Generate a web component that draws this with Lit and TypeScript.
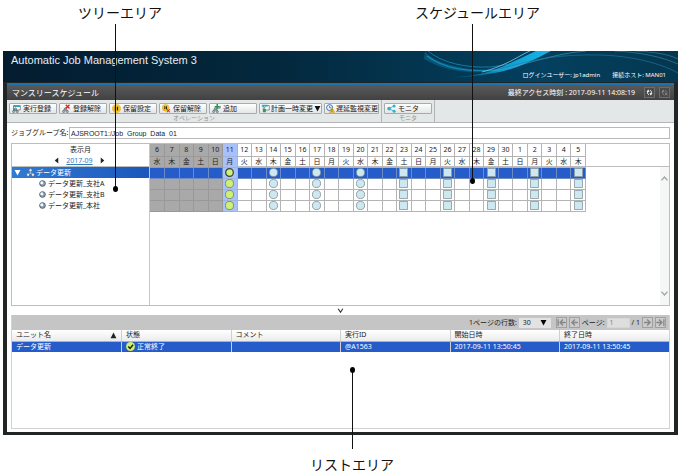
import { LitElement, html, svg, css, nothing } from "lit";
import { customElement } from "lit/decorators.js";
import { classMap } from "lit/directives/class-map.js";

const WEEK = ["水", "木", "金", "土", "日", "月", "火"];
const DAYS = Array.from({ length: 30 }, (_, i) => ({
  day: i < 25 ? i + 6 : i - 24,
  name: WEEK[i % 7],
  past: i < 5,
  today: i === 5,
}));
const ROUND = [8, 11, 14];
const SQUARE = [17, 20, 23, 26, 29];
const JOBS = ["データ更新_支社A", "データ更新_支社B", "データ更新_本社"];

const glass = svg`<path d="M2 2h9v6h-9z" fill="#fff" stroke="#5d6b73"/><path d="M2 2h9v2h-9z" fill="#36a9b5"/>`;
const tree = svg`<path d="M4 6v2M2 10V8h5v2" fill="none" stroke="#4d5961"/><circle cx="4.500" cy="6.500" r="1.500" fill="#9ab6c8" stroke="#4d5961" stroke-width=".7"/><circle cx="2.200" cy="10" r="1.500" fill="#9ab6c8" stroke="#4d5961" stroke-width=".7"/><circle cx="7" cy="10" r="1.500" fill="#9ab6c8" stroke="#4d5961" stroke-width=".7"/>`;

const ICONS: Record<string, unknown> = {
  run: svg`${glass}${tree}`,
  cancel: svg`${tree}<path d="M5 1l5 5M10 1L5 6" stroke="#d8261c" stroke-width="1.800"/>`,
  hold: svg`<circle cx="6" cy="6" r="5.500" fill="#f8c822" stroke="#d89c10" stroke-width=".6"/><path d="M4.500 3.500v5M7.300 3.500v5" stroke="#2c2410" stroke-width="1.700"/>`,
  release: svg`<circle cx="4.800" cy="5" r="4.500" fill="#f8c822" stroke="#d89c10" stroke-width=".6"/><path d="M3.800 3v4M6 3v4" stroke="#2c2410" stroke-width="1.400"/><path d="M6.500 7l4 4M10.500 7l-4 4" stroke="#d8261c" stroke-width="1.400"/>`,
  add: svg`${tree}<path d="M6 5.500h5v-3" fill="none" stroke="#5d6b73"/><path d="M7 0v7M3.500 3.500h7" stroke="#1f9a48" stroke-width="2"/>`,
  plan: svg`<path d="M3 2h8v6h-8z" fill="#fff" stroke="#5d6b73"/><path d="M1 1h8v2.500h-8z" fill="#36a9b5"/><path d="M5 4v4" stroke="#4d5961"/><path d="M2.500 7h4v4h-4z" fill="#2f9b54"/>`,
  delay: svg`<circle cx="4.800" cy="4.800" r="4" fill="#e9f1fb" stroke="#2c65b8" stroke-width="1.200"/><path d="M4.800 2.500v2.500h2" fill="none" stroke="#2c65b8"/><path d="M8 4.500l3.700 6.700H4.500z" fill="#fbc81c" stroke="#a87c08" stroke-width=".5"/><path d="M8 6.800v2M8 9.500v1" stroke="#332600" stroke-width=".9"/>`,
  monitor: svg`<path d="M9 2.500L3 6l6 3.500" fill="none" stroke="#35abc0" stroke-width="1.100"/><circle cx="2.800" cy="6" r="2.500" fill="#35b3cb"/><circle cx="9.500" cy="2.500" r="2" fill="#35b3cb"/><circle cx="9.500" cy="9.500" r="2" fill="#35b3cb"/>`,
  group: svg`<path d="M6 4v3M2.500 9V7h7v2" fill="none" stroke="#cfe0f2"/><circle cx="6" cy="3" r="2.200" fill="#dce9f4" stroke="#39506c" stroke-width=".8"/><circle cx="2.800" cy="9" r="2.200" fill="#dce9f4" stroke="#39506c" stroke-width=".8"/><circle cx="9.200" cy="9" r="2.200" fill="#dce9f4" stroke="#39506c" stroke-width=".8"/>`,
  job: svg`<circle cx="6" cy="6" r="4.900" fill="#8fa5b8" stroke="#3c4f60" stroke-width="1.400"/><circle cx="4.800" cy="4.600" r="2.600" fill="#f3f8fc"/>`,
  ok: svg`<circle cx="6" cy="6" r="5.900" fill="#d4ee6c"/><path d="M3 6l2.400 2.500L9.400 3.800" fill="none" stroke="#1d2408" stroke-width="2"/>`,
  refresh: svg`<path d="M4.800 10C2.400 8.500 2.300 6 3.300 3.500M7.200 2C9.600 3.500 9.700 6 8.700 8.500" fill="none" stroke="#f5f5f5" stroke-width="1.700"/><path d="M.8 4.500L4 .8l2 4.200zM11.200 7.500L8 11.200 6 7z" fill="#f5f5f5"/>`,
  stop: svg`<path d="M4.800 10C2.400 8.500 2.300 6 3.300 3.500M7.200 2C9 3 9.500 4.500 9 6" fill="none" stroke="#8b8b8b" stroke-width="1.500"/><path d="M.8 4.500L4 .8l2 4.200z" fill="#8b8b8b"/><path d="M6.500 6.500l4.500 4.500M11 6.500L6.500 11" stroke="#8b8b8b" stroke-width="1.500"/>`,
  first: svg`<path d="M1.500 1.500v9M11.500 6H4M8 2L4 6l4 4" fill="none" stroke="#858585" stroke-width="1.700"/>`,
  prev: svg`<path d="M10.500 6H2.500M6.500 2L2.500 6l4 4" fill="none" stroke="#858585" stroke-width="1.700"/>`,
  next: svg`<path d="M1.500 6h8M5.500 2l4 4-4 4" fill="none" stroke="#858585" stroke-width="1.700"/>`,
  last: svg`<path d="M10.500 1.500v9M.5 6H8M4 2l4 4-4 4" fill="none" stroke="#858585" stroke-width="1.700"/>`,
  down: svg`<path d="M1 1.500h10L6 11z" fill="currentColor"/>`,
  up: svg`<path d="M1 10.500h10L6 1z" fill="currentColor"/>`,
  left: svg`<path d="M9 1v10L3 6z" fill="currentColor"/>`,
  right: svg`<path d="M3 1v10l6-5z" fill="currentColor"/>`,
  chevUp: svg`<path d="M2 8.500l4-4.500 4 4.500" fill="none" stroke="#a2a2a2" stroke-width="1.800"/>`,
  chevDown: svg`<path d="M2 3.500l4 4.500 4-4.500" fill="none" stroke="#a2a2a2" stroke-width="1.800"/>`,
  fold: svg`<path d="M2 3l4 6 4-6" fill="none" stroke="#333" stroke-width="2"/>`,
  round: svg`<circle cx="6" cy="6" r="5.400" fill="#cde8ee" stroke="#7f9197" stroke-width="1.100"/>`,
  square: svg`<path d="M.6.600h10.800v10.800H.6z" fill="#cde8ee" stroke="#8b9da3" stroke-width="1.200"/>`,
  done: svg`<circle cx="6" cy="6" r="5.400" fill="#cdf077" stroke="#75805a" stroke-width="1.100"/>`,
  doneTop: svg`<circle cx="6" cy="6" r="5.100" fill="#cdf077" stroke="#3c4530" stroke-width="1.700"/>`,
};

const icon = (name: string, size = "") =>
  html`<svg class="icon ${size}" viewBox="0 0 12 12" aria-hidden="true">${ICONS[name]}</svg>`;

@customElement("app-root")
export class AppRoot extends LitElement {
  static styles = css`
    :host {
      display: block;
      min-height: 476px;
      background: #fff;
      color: #222;
      font: 7px/10px "Noto Sans", "Noto Sans CJK JP", sans-serif;
    }
    * { box-sizing: border-box; }
    button, input, select { font: inherit; color: inherit; margin: 0; padding: 0; border-radius: 0; }
    table { border-collapse: collapse; table-layout: fixed; }
    th { font-weight: 400; }
    .icon { display: block; flex: none; width: 9px; height: 9px; }
    .icon.s { width: 7px; height: 7px; }

    .figure { position: relative; padding: 51px 3px 42px; }
    .note {
      position: absolute;
      font: 14px/20px "Noto Sans CJK JP", sans-serif;
      color: #111;
      white-space: nowrap;
    }
    .tree-note { left: 78px; top: 2px; }
    .plan-note { left: 415px; top: 2px; }
    .list-note { left: 310px; top: 454px; }
    .line { position: absolute; width: 1px; background: #111; }
    .line::after {
      content: "";
      position: absolute;
      left: -2px;
      bottom: -3px;
      width: 5px;
      height: 6px;
      border-radius: 50%;
      background: #000;
    }
    .line.flip::after { bottom: auto; top: -3px; }
    .tree-line { left: 115px; top: 24px; height: 165px; }
    .plan-line { left: 472px; top: 24px; height: 157px; }
    .list-line { left: 352px; top: 370px; height: 79px; }

    .banner {
      display: grid;
      height: 31px;
      background: linear-gradient(90deg, #031c30, #03283d 40%, #04405f 80%, #04374f);
      color: #fff;
    }
    .banner > * { grid-area: 1 / 1; }
    .swoosh { justify-self: end; width: 278px; height: 31px; }
    .banner-text { display: flex; justify-content: space-between; padding: 0 12px 0 8px; }
    h1 { margin: 0; font: 11px/18px "Liberation Sans", sans-serif; color: #e8eef2; }
    .login { display: flex; gap: 12px; align-self: end; padding-bottom: 2px; font-size: 6px; }

    .frame {
      border: solid #222526;
      border-width: 1px 4px 3px;
      background: #fff;
    }
    .titlebar {
      display: flex;
      align-items: center;
      height: 17px;
      padding: 0 4px 0 5px;
      border-top: 2px solid #1c73ab;
      background: linear-gradient(#5a5a5a, #414141);
      color: #fff;
    }
    h2 { flex: 1; margin: 0; font: 8px/12px "Noto Sans CJK JP", sans-serif; }
    .titlebar button {
      display: grid;
      place-items: center;
      width: 11px;
      height: 11px;
      margin-left: 4px;
      border: 1px solid #6c6c6c;
      background: #4b4b4b;
    }
    .titlebar time { margin-right: 5px; }

    .toolbar { display: flex; height: 23px; background: #e3e7e7; border-bottom: 1px solid #b3b6b6; }
    .tools { padding: 3px 2px 0; border-right: 1px solid #b3b6b6; }
    .row { display: flex; gap: 2px; }
    .tools button {
      display: flex;
      align-items: center;
      gap: 2px;
      width: 48px;
      height: 11px;
      padding: 0 2px;
      border: 1px solid #a6abab;
      border-radius: 1px;
      background: linear-gradient(#fff, #e4e6e6);
      white-space: nowrap;
    }
    .tools button.menu { width: 63px; gap: 1px; padding: 0 1px; color: #111; }
    .tools button.wide { width: 55px; gap: 1px; padding: 0 1px; }
    .tools .caption { text-align: center; font-size: 6px; line-height: 8px; color: #8f9494; }

    .main { padding: 4px 4px 3px; }
    .group { display: flex; align-items: center; height: 12px; margin-bottom: 4px; }
    .group label { flex: none; width: 58px; white-space: nowrap; }
    .group input {
      flex: 1;
      min-width: 0;
      height: 12px;
      border: 1px solid #b9b9b9;
      padding: 0 1px;
      font-family: "Liberation Sans", sans-serif;
    }

    .planner { display: grid; grid-template-columns: 21% 1fr; height: 163px; border: 1px solid #bdbdbd; }
    .tree { border-right: 1px solid #c6c6c6; }
    .month { height: 23px; text-align: center; border-bottom: 1px solid #bdbdbd; }
    .month div { display: flex; justify-content: center; align-items: center; gap: 6px; height: 11px; }
    .month div:last-child { padding-right: 2px; }
    .month a { color: #2d7cc4; }
    .month button { border: 0; background: none; display: grid; }
    ul { list-style: none; margin: 0; padding: 0; }
    li { display: flex; align-items: center; gap: 2px; height: 11px; padding-left: 27px; white-space: nowrap; }
    li.top { padding-left: 2px; gap: 0; color: #fff; background: linear-gradient(90deg, #2f7bd4, #1c57bb); }
    li.top .icon + .icon { margin: 0 1px 0 5px; }

    .plan { display: grid; grid-template-rows: 23px 1fr; grid-template-columns: 1fr 9px; }
    .plan > * { grid-row: 1 / 3; grid-column: 1 / 3; }
    .plan .head-line { grid-row: 1; border-bottom: 1px solid #bdbdbd; }
    .plan .scroll {
      grid-row: 2;
      grid-column: 2;
      display: flex;
      flex-direction: column;
      justify-content: space-between;
      align-items: center;
      padding: 7px 0;
      background: #f5f7f7;
    }
    .days { width: 84%; align-self: start; }
    .days th, .days td {
      height: 11px;
      padding: 0;
      border: solid #b4b4b4;
      border-width: 0 1px 1px 0;
      line-height: 9px;
      text-align: center;
    }
    .days thead tr:first-child th { height: 12px; }
    .days .icon { margin: 0 auto; }
    .days .past { background: #a9a9a9; border-color: #999; }
    .days .sel td { background: #265cc9; border-color: #6e8bc4; }
    .days .today, .days .sel td.today { background: #a9c1f9; border-color: #a0b4e4; }

    .fold { display: grid; place-items: center; width: 100%; height: 9px; border: 0; background: none; }

    .list { height: 114px; border: 1px solid #d2d2d2; border-top: 0; }
    .pager {
      display: flex;
      align-items: center;
      justify-content: flex-end;
      gap: 2px;
      height: 15px;
      padding-right: 3px;
      background: #c5c5c5;
    }
    .pager button { display: grid; place-items: center; width: 11px; height: 11px; border: 1px solid #a0a0a0; background: #cbcbcb; }
    .pick { display: grid; align-items: center; width: 32px; margin-right: 3px; }
    .pick > * { grid-area: 1 / 1; }
    .pick .icon { justify-self: end; margin-right: 4px; pointer-events: none; color: #000; }
    .pick select { appearance: none; width: 100%; height: 10px; border: 0; padding-left: 4px; background: #e2e2e2; line-height: 10px; }
    .pager input { width: 23px; height: 10px; padding: 0 2px; border: 1px solid #d6d6d6; background: #dedede; color: #888; }

    .rows { width: 100%; }
    .rows th, .rows td { padding: 0 4px; text-align: left; white-space: nowrap; border-left: 1px solid #cfcfcf; }
    .rows th:first-child, .rows td:first-child { border-left: 0; }
    .rows th { height: 11px; background: linear-gradient(#fff, #ebebeb); border-bottom: 1px solid #b9b39b; }
    .rows td { height: 11px; background: #265cc9; color: #fff; }
    .cell { display: flex; align-items: center; gap: 2px; height: 10px; }
    .cell.sort { justify-content: space-between; }
  `;

  private tool(name: string, label: string, kind = "") {
    return html`<button type="button" class=${kind}>
      ${icon(name)}<span>${label}</span>${kind === "menu" ? icon("down", "s") : nothing}
    </button>`;
  }

  private mark(col: number, top: boolean) {
    if (col === 5) return icon(top ? "doneTop" : "done");
    if (ROUND.includes(col)) return icon("round");
    if (SQUARE.includes(col)) return icon("square");
    return nothing;
  }

  private banner() {
    return html`<header class="banner">
      <svg class="swoosh" viewBox="0 0 278 31" preserveAspectRatio="none" aria-hidden="true">
        <defs>
          <linearGradient id="glow" x1="0" x2="1">
            <stop offset="0" stop-color="#0a6f9d" stop-opacity=".2" />
            <stop offset=".5" stop-color="#0e9cd0" />
            <stop offset="1" stop-color="#17b5e6" />
          </linearGradient>
        </defs>
        <path d="M25 0C32 10 55 18 92 20C76 22 50 23 24 8z" fill="#0c7ba9" opacity=".45" />
        <path d="M27 5C45 18 66 21 98 19" fill="none" stroke="#1e9ccb" stroke-width="1.500" opacity=".7" />
        <path d="M28 0C42 12 66 17 90 16C118 13 132 6 146 0" fill="none" stroke="#1b88b4" opacity=".8" />
        <path d="M50 26C88 26 105 14 136 0h15C128 12 112 20 88 23C74 25 62 27 50 26z" fill="url(#glow)" />
        <path d="M82 21C108 14 120 4 130 0" fill="none" stroke="#7ed3ee" stroke-width=".8" />
        <path d="M92 20C124 15 150 3 186 0" fill="none" stroke="#4aa5c4" stroke-width=".6" />
        <path d="M100 18C134 8 160 3 200 4C232 5 260 12 278 22" fill="none" stroke="#227da2" stroke-width=".6" />
        <path d="M214 0C240 1 262 6 278 13M236 0C254 1 268 3 278 8" fill="none" stroke="#3c8dad" stroke-width=".6" />
      </svg>
      <div class="banner-text">
        <h1>Automatic Job Management System 3</h1>
        <div class="login"><span>ログインユーザー: jp1admin</span><span>接続ホスト: MAN01</span></div>
      </div>
    </header>`;
  }

  private planner() {
    return html`<section class="planner">
      <div class="tree">
        <div class="month">
          <div>表示月</div>
          <div>
            <button type="button" aria-label="前月">${icon("left", "s")}</button>
            <a href="#month">2017-09</a>
            <button type="button" aria-label="翌月">${icon("right", "s")}</button>
          </div>
        </div>
        <ul>
          <li class="top">${icon("down", "s")}${icon("group")}<span>データ更新</span></li>
          ${JOBS.map((j) => html`<li>${icon("job", "s")}<span>${j}</span></li>`)}
        </ul>
      </div>
      <div class="plan">
        <div class="head-line"></div>
        <table class="days">
          <thead>
            ${(["day", "name"] as const).map(
              (k) => html`<tr>${DAYS.map((d) => html`<th class=${classMap({ past: d.past, today: d.today })}>${d[k]}</th>`)}</tr>`
            )}
          </thead>
          <tbody>
            ${[0, 1, 2, 3].map(
              (r) => html`<tr class=${r === 0 ? "sel" : ""}>
                ${DAYS.map((d, c) => html`<td class=${classMap({ past: d.past, today: d.today })}>${this.mark(c, r === 0)}</td>`)}
              </tr>`
            )}
          </tbody>
        </table>
        <div class="scroll">${icon("chevUp")}${icon("chevDown")}</div>
      </div>
    </section>`;
  }

  private list() {
    return html`<section class="list">
      <div class="pager">
        <label for="size">1ページの行数:</label>
        <span class="pick"><select id="size"><option>30</option></select>${icon("down", "s")}</span>
        <button type="button" aria-label="先頭">${icon("first")}</button>
        <button type="button" aria-label="前へ">${icon("prev")}</button>
        <label for="page">ページ:</label>
        <input id="page" value="1" />
        <span>/ 1</span>
        <button type="button" aria-label="次へ">${icon("next")}</button>
        <button type="button" aria-label="末尾">${icon("last")}</button>
      </div>
      <table class="rows">
        <thead>
          <tr>
            <th><div class="cell sort">ユニット名${icon("up", "s")}</div></th>
            ${["状態", "コメント", "実行ID", "開始日時", "終了日時"].map((t) => html`<th>${t}</th>`)}
          </tr>
        </thead>
        <tbody>
          <tr>
            <td>データ更新</td>
            <td><div class="cell">${icon("ok")}正常終了</div></td>
            <td></td>
            <td>@A1563</td>
            <td>2017-09-11 13:50:45</td>
            <td>2017-09-11 13:50:45</td>
          </tr>
        </tbody>
      </table>
    </section>`;
  }

  render() {
    return html`<div class="figure">
      ${this.banner()}
      <div class="frame">
        <div class="titlebar">
          <h2>マンスリースケジュール</h2>
          <time>最終アクセス時刻 : 2017-09-11 14:08:19</time>
          <button type="button" aria-label="更新">${icon("refresh", "s")}</button>
          <button type="button" aria-label="自動更新">${icon("stop", "s")}</button>
        </div>
        <div class="toolbar">
          <div class="tools">
            <div class="row">
              ${this.tool("run", "実行登録")}${this.tool("cancel", "登録解除")}${this.tool("hold", "保留設定")}
              ${this.tool("release", "保留解除")}${this.tool("add", "追加")}${this.tool("plan", "計画一時変更", "menu")}
              ${this.tool("delay", "遅延監視変更", "wide")}
            </div>
            <div class="caption">オペレーション</div>
          </div>
          <div class="tools">
            <div class="row">${this.tool("monitor", "モニタ")}</div>
            <div class="caption">モニタ</div>
          </div>
        </div>
        <main class="main">
          <div class="group">
            <label for="path">ジョブグループ名:</label>
            <input id="path" value="AJSROOT1:/Job_Group_Data_01" />
          </div>
          ${this.planner()}
          <button type="button" class="fold" aria-label="リストを閉じる">${icon("fold", "s")}</button>
          ${this.list()}
        </main>
      </div>
      <span class="note tree-note">ツリーエリア</span><span class="line tree-line"></span>
      <span class="note plan-note">スケジュールエリア</span><span class="line plan-line"></span>
      <span class="note list-note">リストエリア</span><span class="line flip list-line"></span>
    </div>`;
  }
}
